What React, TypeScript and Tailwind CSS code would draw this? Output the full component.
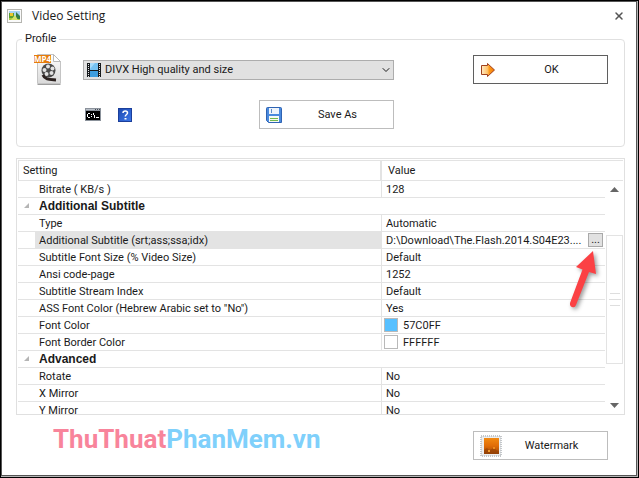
import { ChevronDown, X } from "lucide-react";
import type { ReactNode } from "react";

type Row = {
  name: string;
  value?: string;
  group?: boolean;
  selected?: boolean;
  swatch?: string;
};

const rows: Row[] = [
  { name: "Bitrate ( KB/s )", value: "128" },
  { name: "Additional Subtitle", group: true },
  { name: "Type", value: "Automatic" },
  { name: "Additional Subtitle (srt;ass;ssa;idx)", value: "D:\\Download\\The.Flash.2014.S04E23....", selected: true },
  { name: "Subtitle Font Size (% Video Size)", value: "Default" },
  { name: "Ansi code-page", value: "1252" },
  { name: "Subtitle Stream Index", value: "Default" },
  { name: 'ASS Font Color (Hebrew Arabic set to "No")', value: "Yes" },
  { name: "Font Color", value: "57C0FF", swatch: "bg-[#57c0ff]" },
  { name: "Font Border Color", value: "FFFFFF", swatch: "bg-white" },
  { name: "Advanced", group: true },
  { name: "Rotate", value: "No" },
  { name: "X Mirror", value: "No" },
  { name: "Y Mirror", value: "No" },
];

function AppIcon() {
  return (
    <svg width="15" height="14" viewBox="0 0 15 14" aria-hidden="true">
      <rect x="0.5" y="0.5" width="14" height="13" fill="#fafafa" stroke="#b5b5b0" />
      <rect x="2" y="2" width="11" height="6" fill="#a9d3f2" />
      <rect x="2" y="8" width="11" height="3" fill="#a8c83c" />
      <path d="M2 4h5v5H2z" fill="#5b9e30" />
      <path d="M3 4h3v3H3z" fill="#ecc62c" />
      <path d="M9 3l4 4v3H9z" fill="#357c46" />
      <path d="M4 11l4-5 3 5z" fill="#d3e36a" />
    </svg>
  );
}

function Mp4Icon() {
  return (
    <svg width="28" height="33" viewBox="0 0 28 33" aria-hidden="true">
      <defs>
        <linearGradient id="paper" x1="0" y1="0" x2="0" y2="1">
          <stop offset="0" stopColor="#ffffff" />
          <stop offset="1" stopColor="#d9d9d9" />
        </linearGradient>
      </defs>
      <path d="M3.5 1.5h16l7 7v22h-23z" fill="url(#paper)" stroke="#c4c4c4" />
      <path d="M19.5 1.5l7 7h-7z" fill="#ffffff" stroke="#b9b9b9" />
      <path d="M3.5 31.5h23" stroke="#9d9d9d" />
      <circle cx="14.5" cy="17.5" r="7" fill="#4a4a4a" />
      <circle cx="14" cy="13.500" r="2" fill="#e2e2e2" />
      <circle cx="18.500" cy="15.500" r="2" fill="#e2e2e2" />
      <circle cx="10.500" cy="17" r="2" fill="#e2e2e2" />
      <circle cx="12.500" cy="21" r="2" fill="#e2e2e2" />
      <circle cx="17.500" cy="20" r="2" fill="#e2e2e2" />
      <path d="M9 22c2 5 7 4.500 13 5" fill="none" stroke="#2c2220" strokeWidth="3" />
      <rect x="0" y="2" width="17" height="8" fill="#e77c0c" />
      <text x="8.500" y="9" textAnchor="middle" fontSize="8" fontWeight="700" fill="#fff" fontFamily="Open Sans, sans-serif">
        MP4
      </text>
    </svg>
  );
}

function FilmIcon() {
  return (
    <svg width="14" height="14" viewBox="0 0 14 14" aria-hidden="true">
      <rect width="14" height="14" fill="#16191c" />
      <rect x="3" width="8" height="7" fill="#76c2f2" />
      <rect x="3" y="8" width="8" height="6" fill="#3d9ddf" />
      <path d="M3 0h5L3 6z" fill="#a5dafa" />
      <path d="M1.500 1v13M12.500 1v13" stroke="#e8e8e8" strokeDasharray="1 1" />
    </svg>
  );
}

function ConsoleIcon() {
  return (
    <svg width="16" height="13" viewBox="0 0 16 13" aria-hidden="true">
      <rect width="16" height="13" fill="#8b929b" />
      <rect x="1" y="1" width="14" height="1" fill="#b8bfc8" />
      <path d="M10 1.500h1M12 1.500h1M14 1.500h1" stroke="#454b55" />
      <rect x="1" y="3" width="14" height="9" fill="#000" />
      <path d="M3 5.500h2M2.500 6v3M3 9.500h2M6.500 6v1M6.500 8v1M8.500 5v2M9.500 7v3M11 9.500h3" fill="none" stroke="#fff" />
    </svg>
  );
}

function HelpIcon() {
  return (
    <svg width="14" height="14" viewBox="0 0 14 14" aria-hidden="true">
      <defs>
        <linearGradient id="help" x1="0" y1="0" x2="1" y2="1">
          <stop offset="0" stopColor="#1d49b0" />
          <stop offset="1" stopColor="#3c78ea" />
        </linearGradient>
      </defs>
      <rect x="0.500" y="0.500" width="13" height="13" fill="url(#help)" stroke="#1b3f9b" />
      <path d="M5 5c0-2.600 4.500-2.600 4.500 0C9.500 6.500 7.300 6.500 7.300 8.500" fill="none" stroke="#fff" strokeWidth="1.500" />
      <rect x="6.500" y="10" width="2" height="1.500" fill="#fff" />
    </svg>
  );
}

function FloppyIcon() {
  return (
    <svg width="16" height="16" viewBox="0 0 16 16" aria-hidden="true">
      <path d="M0.500 1.500a1 1 0 0 1 1-1h13a1 1 0 0 1 1 1v14h-13l-2-2z" fill="#4a8ade" stroke="#2f63b2" />
      <rect x="3" y="1" width="10" height="6" fill="#eef4fb" />
      <rect x="5" y="2" width="1" height="4" fill="#5d8cc8" />
      <rect x="3" y="9" width="10" height="6" fill="#f7faf4" />
      <path d="M4 11.500h8M4 13.500h8" stroke="#72b84d" />
    </svg>
  );
}

function ArrowIcon() {
  return (
    <svg width="16" height="14" viewBox="0 0 16 14" aria-hidden="true">
      <defs>
        <linearGradient id="arrow" x1="0" y1="0" x2="1" y2="0">
          <stop offset="0" stopColor="#ffe9c6" />
          <stop offset="0.450" stopColor="#ffc56e" />
          <stop offset="0.600" stopColor="#ff9a1c" />
          <stop offset="1" stopColor="#f07800" />
        </linearGradient>
      </defs>
      <path d="M1.500 2.500h6V0.500L14.500 7l-7 6.500v-2h-6z" fill="url(#arrow)" stroke="#a0401c" />
    </svg>
  );
}

function StampIcon() {
  return (
    <svg width="22" height="22" viewBox="0 0 22 22" aria-hidden="true">
      <defs>
        <linearGradient id="stamp" x1="0" y1="0" x2="0" y2="1">
          <stop offset="0" stopColor="#f28a12" />
          <stop offset="0.500" stopColor="#e06c08" />
          <stop offset="1" stopColor="#9a4608" />
        </linearGradient>
      </defs>
      <rect x="1" y="1" width="20" height="20" fill="#e2e4e6" stroke="#c4c7ca" strokeWidth="2" strokeDasharray="1 1" />
      <rect x="2" y="2" width="18" height="18" fill="#eceef0" />
      <rect x="4" y="3" width="15" height="16" fill="url(#stamp)" />
      <path d="M4 15l3-2 2 2 3-1 2-2 2 3 3 1v3H4z" fill="#8a3a04" opacity="0.500" />
      <rect x="8" y="15" width="2" height="2" fill="#f29a2c" />
      <rect x="13" y="12" width="2" height="2" fill="#ec8a1c" />
    </svg>
  );
}

function IconButton({ icon, label, primary }: { icon: ReactNode; label: string; primary?: boolean }) {
  return (
    <button
      className={`flex h-[29px] w-[135px] items-center border bg-white px-1.5 text-[11px] leading-4 ${
        primary ? "border-[#5f5f5f]" : "border-[#bdbdbd]"
      }`}
    >
      <span className="flex w-[22px] shrink-0">{icon}</span>
      <span className="flex-1 text-center">{label}</span>
    </button>
  );
}

function SettingRow({ row }: { row: Row }) {
  if (row.group) {
    return (
      <tr className="h-[17px]">
        <th colSpan={2} className="border-b border-[#e3e3e3] p-0 text-left font-['Liberation_Sans',sans-serif] text-xs leading-4 font-bold">
          <span className="flex items-center">
            <svg width="21" height="6" viewBox="0 0 21 6" aria-hidden="true">
              <path d="M11 0v5H6z" fill="#b5b5b5" />
            </svg>
            {row.name}
          </span>
        </th>
        <td />
      </tr>
    );
  }
  return (
    <tr className="h-[17px]">
      <td className="border-r border-b border-[#e3e3e3] p-0 pl-[17px]">
        <div className={`truncate pt-0.5 pl-1 leading-3.5 ${row.selected ? "bg-[#e3e3e3]" : ""}`}>{row.name}</div>
      </td>
      <td className="border-b border-[#e3e3e3] p-0 pl-1">
        <div className="flex h-4 items-center justify-between">
          <span className="flex items-center gap-[5px]">
            {row.swatch && <span className={`-ml-0.5 size-3.5 border border-[#b9b9b9] ${row.swatch}`} />}
            <span className="pt-0.5 leading-3.5 whitespace-nowrap">{row.value}</span>
          </span>
          {row.selected && (
            <button aria-label="Browse" className="mr-0.5 flex h-3.5 w-[15px] shrink-0 items-center justify-center border border-[#a9a9a9] bg-[#e1e1e1] leading-3">
              ...
            </button>
          )}
        </div>
      </td>
      <td />
    </tr>
  );
}

function ScrollBar() {
  return (
    <div className="absolute top-[23px] right-0.5 bottom-px flex w-[17px] flex-col items-center bg-white">
      <svg width="9" height="5" viewBox="0 0 9 5" className="mt-1.5" aria-hidden="true">
        <path d="M4.500 0L9 5H0z" fill="#666" />
      </svg>
      <div className="mt-[43px] flex h-[129px] w-full flex-col items-center justify-center gap-[5px] border border-[#e3e3e3]">
        <span className="h-px w-2.5 bg-[#dedede]" />
        <span className="h-px w-3 bg-[#dedede]" />
        <span className="h-px w-2.5 bg-[#dedede]" />
      </div>
      <svg width="9" height="5" viewBox="0 0 9 5" className="mt-auto mb-1.5" aria-hidden="true">
        <path d="M4.500 5L9 0H0z" fill="#666" />
      </svg>
    </div>
  );
}

function PointerArrow() {
  return (
    <svg
      width="36"
      height="66"
      viewBox="0 0 36 66"
      className="pointer-events-none absolute top-[90px] right-[21px] drop-shadow-[2px_2px_2px_rgba(0,0,0,0.4)]"
      aria-hidden="true"
    >
      <path d="M25 3L8 19l6.500 2.500L2 55q-.5 3 2 4 3 1 4-2L21 24l7 2z" fill="#fb4144" />
    </svg>
  );
}

export default function App() {
  return (
    <div className="border border-black bg-[#b5b5b5] pr-px pb-px">
      <main className="flex min-h-[475px] flex-col border border-[#555] bg-white pr-[11px] pb-3 pl-[14px] font-['Roboto',sans-serif] text-[11px] leading-4 text-[#1a1a1a]">
        <header className="-ml-[9px] flex h-7 items-center">
          <AppIcon />
          <h1 className="ml-2.5 flex-1 font-['Open_Sans',sans-serif] text-xs">Video Setting</h1>
          <button aria-label="Close">
            <X className="size-3 text-[#555]" strokeWidth={3} />
          </button>
        </header>

        <fieldset className="mt-px rounded-sm border border-[#e0e0e0] pr-4 pb-[17px] pl-[17px]">
          <legend className="-ml-3 px-[3px]">Profile</legend>
          <div className="mt-1.5 grid grid-cols-[49px_1fr_214px] items-center gap-y-3.5">
            <Mp4Icon />
            <div className="relative">
              <select
                aria-label="Profile"
                className="block h-5 w-full appearance-none border border-[#adadad] bg-[#e1e1e1] pl-[21px] text-[11px] leading-4"
              >
                <option>DIVX High quality and size</option>
              </select>
              <span className="pointer-events-none absolute top-[3px] left-1">
                <FilmIcon />
              </span>
              <ChevronDown className="pointer-events-none absolute top-1 right-0.5 size-3" strokeWidth={2} />
            </div>
            <div className="flex justify-end">
              <IconButton icon={<ArrowIcon />} label="OK" primary />
            </div>
            <div className="col-start-2 flex items-center">
              <button aria-label="Command line" className="ml-0.5">
                <ConsoleIcon />
              </button>
              <button aria-label="Help" className="ml-[17px]">
                <HelpIcon />
              </button>
              <span className="ml-auto">
                <IconButton icon={<FloppyIcon />} label="Save As" />
              </span>
            </div>
          </div>
        </fieldset>

        <section className="relative mt-[11px]">
          <div className="h-[257px] overflow-hidden border border-[#e0e0e0] p-px">
            <table className="w-full table-fixed border-separate border-spacing-0">
              <colgroup>
                <col />
                <col className="w-[223px]" />
                <col className="w-[18px]" />
              </colgroup>
              <thead>
                <tr className="h-[21px]">
                  <th className="border-y border-r-2 border-l border-[#e3e3e3] p-0 pl-1 text-left font-normal">Setting</th>
                  <th className="border-y border-[#e3e3e3] p-0 pl-1.5 text-left font-normal">Value</th>
                  <th className="border-y border-[#e3e3e3] p-0" />
                </tr>
              </thead>
              <tbody>
                {rows.map((row) => (
                  <SettingRow key={row.name} row={row} />
                ))}
              </tbody>
            </table>
          </div>
          <ScrollBar />
          <PointerArrow />
        </section>

        <footer className="mt-4 flex h-[31px] items-start justify-between pr-[17px] pl-[37px]">
          <span className="text-[26px] leading-4 font-bold text-[#7fd0fb]">
            <span className="text-[#f8849b]">ThuThuat</span>PhanMem.vn
          </span>
          <IconButton icon={<StampIcon />} label="Watermark" />
        </footer>
      </main>
    </div>
  );
}
